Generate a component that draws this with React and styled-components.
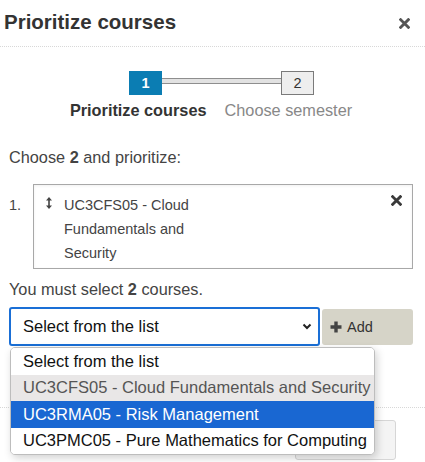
import React from 'react';
import styled, { createGlobalStyle } from 'styled-components';

const GlobalStyle = createGlobalStyle`
  body {
    margin: 0;
    background: #fff;
    font-family: "Liberation Sans", Arial, sans-serif;
    color: #333;
  }
`;

const Modal = styled.div`
  width: 425px;
  height: 462px;
  overflow: hidden;
  background: #fff;
`;

const Header = styled.div`
  height: 46px;
  display: flex;
  align-items: center;
  justify-content: space-between;
  padding: 0 15px 0 4px;
  border-bottom: 1px dotted #d8d8d8;
`;

const Title = styled.h4`
  margin: 0;
  font-size: 20.5px;
  font-weight: 700;
  color: #333;
  padding-bottom: 2px;
`;

const CloseButton = styled.span`
  display: flex;
`;

const Body = styled.div`
  padding: 0 12px 0 9px;
`;

const Steps = styled.div`
  display: flex;
  justify-content: center;
  margin: 24px 0 0 21px;
`;

const StepBox = styled.div`
  width: 33px;
  height: 24px;
  box-sizing: border-box;
  display: flex;
  align-items: center;
  justify-content: center;
  font-size: 14.5px;
  font-weight: ${(p) => (p.active ? 700 : 400)};
  color: ${(p) => (p.active ? '#fff' : '#333')};
  background: ${(p) => (p.active ? '#0b7db3' : '#eeeeee')};
  border: 1px solid ${(p) => (p.active ? '#0b7db3' : '#7a7a7a')};
`;

const StepLine = styled.div`
  width: 119px;
  height: 6px;
  box-sizing: border-box;
  margin-top: 7px;
  background: #e2e2e2;
  border-top: 1px solid #8e8e8e;
  border-bottom: 1px solid #8e8e8e;
`;

const StepLabels = styled.div`
  display: flex;
  justify-content: center;
  gap: 18px;
  margin-top: 5px;
  line-height: 20px;
  font-size: 16.3px;
`;

const StepLabel = styled.span`
  font-weight: ${(p) => (p.active ? 700 : 400)};
  color: ${(p) => (p.active ? '#333' : '#888')};
`;

const Para = styled.p`
  margin: ${(p) => p.margin || '0'};
  font-size: 16.3px;
  line-height: 20px;
  color: #444;
`;

const ItemRow = styled.div`
  display: flex;
  margin-top: 17px;
`;

const ItemNumber = styled.span`
  width: 24px;
  font-size: 14.5px;
  line-height: 24px;
  padding-top: 9px;
  color: #444;
`;

const ItemBox = styled.div`
  flex: 1;
  height: 85px;
  box-sizing: border-box;
  border: 1px solid #a8a8a8;
  box-shadow: inset 0 1px 3px rgba(0, 0, 0, 0.06);
  display: flex;
  align-items: flex-start;
  padding: 8px 10px 0 12px;
`;

const DragHandle = styled.span`
  display: flex;
  width: 18px;
  padding-top: 4px;
`;

const ItemText = styled.span`
  width: 135px;
  font-size: 14.5px;
  line-height: 24px;
  color: #444;
`;

const RemoveButton = styled.span`
  margin-left: auto;
  display: flex;
  padding-top: 2px;
`;

const SelectRow = styled.div`
  position: relative;
  display: flex;
  align-items: center;
  gap: 2px;
  margin-top: 8px;
`;

const SelectBox = styled.div`
  width: 311px;
  height: 39px;
  box-sizing: border-box;
  border: 2px solid #1a6fd6;
  border-radius: 3px;
  display: flex;
  align-items: center;
  justify-content: space-between;
  padding: 0 6px 0 12px;
  font-size: 16.5px;
  color: #111;
  background: #fff;
`;

const AddButton = styled.button`
  width: 91px;
  height: 36px;
  border: none;
  border-radius: 3px;
  background: #d6d4c8;
  display: flex;
  align-items: center;
  gap: 5px;
  padding: 0 8px;
  font-family: inherit;
  font-size: 14.5px;
  color: #333;
`;

const Dropdown = styled.ul`
  position: absolute;
  top: 40px;
  left: 1px;
  width: 363px;
  margin: 0;
  padding: 0;
  list-style: none;
  background: #fff;
  border: 1px solid #bdbdbd;
  border-radius: 5px;
  overflow: hidden;
  box-shadow: 2px 3px 8px rgba(0, 0, 0, 0.18);
  z-index: 2;
`;

const Option = styled.li`
  height: 26.5px;
  display: flex;
  align-items: center;
  padding-left: 12px;
  font-size: 16.5px;
  white-space: nowrap;
  background: ${(p) => (p.selected ? '#1967d2' : p.hover ? '#e9e7e7' : '#fff')};
  color: ${(p) => (p.selected ? '#fff' : p.hover ? '#555' : '#111')};
`;

const Footer = styled.div`
  margin-top: 61px;
  border-top: 1px dotted #d8d8d8;
  display: flex;
  justify-content: flex-end;
  padding: 12px 29px 0 0;
`;

const FooterButton = styled.div`
  width: 101px;
  height: 40px;
  box-sizing: border-box;
  border: 1px solid #d6d6d6;
  border-radius: 3px;
  background: #f4f4f4;
`;

const Cross = ({ size = 10, color = '#555' }) => (
  <svg width={size} height={size} viewBox="0 0 10 10">
    <path d="M1.5 1.5 L8.5 8.5 M8.5 1.5 L1.5 8.5" stroke={color} strokeWidth="2.6" strokeLinecap="square" />
  </svg>
);

const Plus = () => (
  <svg width="12" height="12" viewBox="0 0 12 12">
    <path d="M4.3 0.5 H7.7 V4.3 H11.5 V7.7 H7.7 V11.5 H4.3 V7.7 H0.5 V4.3 H4.3 Z" fill="#444" />
  </svg>
);

const Chevron = () => (
  <svg width="10" height="7" viewBox="0 0 10 7">
    <path d="M1.5 1.5 L5 5 L8.5 1.5" fill="none" stroke="#222" strokeWidth="2" />
  </svg>
);

const VerticalArrows = () => (
  <svg width="6" height="12" viewBox="0 0 6 12">
    <path d="M3 0 L6 3.5 H0 Z M3 12 L6 8.5 H0 Z" fill="#444" />
    <rect x="2.2" y="3" width="1.6" height="6" fill="#444" />
  </svg>
);

const options = [
  'Select from the list',
  'UC3CFS05 - Cloud Fundamentals and Security',
  'UC3RMA05 - Risk Management',
  'UC3PMC05 - Pure Mathematics for Computing',
];

const App = () => (
  <Modal>
    <GlobalStyle />
    <Header>
      <Title>Prioritize courses</Title>
      <CloseButton>
        <Cross size={11} color="#555" />
      </CloseButton>
    </Header>
    <Body>
      <Steps>
        <StepBox active>1</StepBox>
        <StepLine />
        <StepBox>2</StepBox>
      </Steps>
      <StepLabels>
        <StepLabel active>Prioritize courses</StepLabel>
        <StepLabel>Choose semester</StepLabel>
      </StepLabels>
      <Para margin="27px 0 0">
        Choose <b>2</b> and prioritize:
      </Para>
      <ItemRow>
        <ItemNumber>1.</ItemNumber>
        <ItemBox>
          <DragHandle>
            <VerticalArrows />
          </DragHandle>
          <ItemText>UC3CFS05 - Cloud Fundamentals and Security</ItemText>
          <RemoveButton>
            <Cross size={11} color="#3a3a3a" />
          </RemoveButton>
        </ItemBox>
      </ItemRow>
      <Para margin="10px 0 0">
        You must select <b>2</b> courses.
      </Para>
      <SelectRow>
        <SelectBox>
          <span>Select from the list</span>
          <Chevron />
        </SelectBox>
        <AddButton>
          <Plus />
          Add
        </AddButton>
        <Dropdown>
          {options.map((o, i) => (
            <Option key={o} hover={i === 1} selected={i === 2}>
              {o}
            </Option>
          ))}
        </Dropdown>
      </SelectRow>
    </Body>
    <Footer>
      <FooterButton />
    </Footer>
  </Modal>
);

export default App;
